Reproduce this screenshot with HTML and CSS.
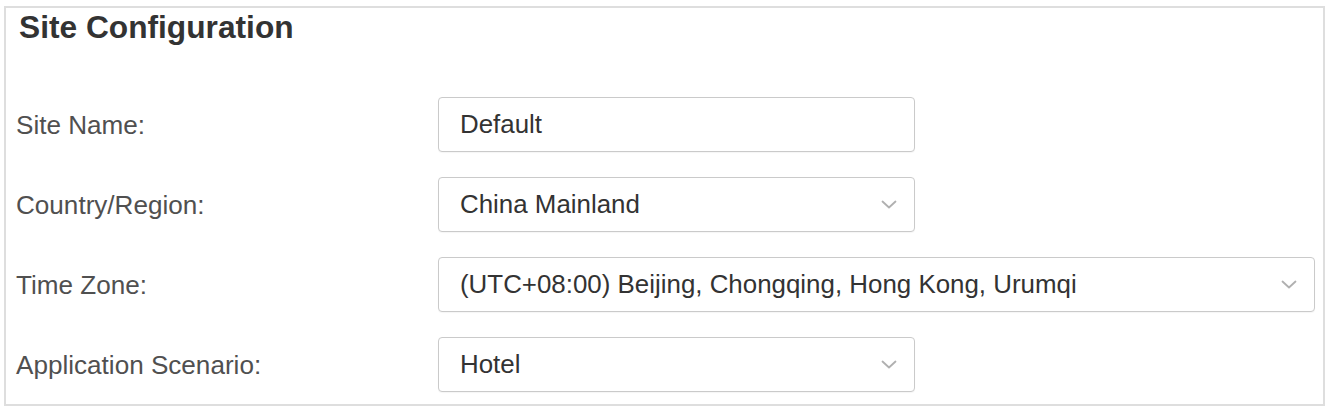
FILE: index.html
```html
<!DOCTYPE html>
<html lang="en">
<head>
<meta charset="utf-8">
<title>Site Configuration</title>
<link rel="stylesheet" href="styles.css">
</head>
<body>
<section class="panel">
  <h2 class="title">Site Configuration</h2>
  <div class="form">
    <div class="label">Site Name:</div>
    <div class="field short"><span class="value">Default</span></div>

    <div class="label">Country/Region:</div>
    <div class="field short select"><span class="value">China Mainland</span>
      <svg class="chev" width="16" height="9" viewBox="0 0 16 9"><polyline points="1.5,1.5 8,7.5 14.5,1.5" fill="none" stroke="#b0b0b0" stroke-width="1.8" stroke-linecap="round" stroke-linejoin="round"/></svg>
    </div>

    <div class="label">Time Zone:</div>
    <div class="field wide select"><span class="value">(UTC+08:00) Beijing, Chongqing, Hong Kong, Urumqi</span>
      <svg class="chev" width="16" height="9" viewBox="0 0 16 9"><polyline points="1.5,1.5 8,7.5 14.5,1.5" fill="none" stroke="#b0b0b0" stroke-width="1.8" stroke-linecap="round" stroke-linejoin="round"/></svg>
    </div>

    <div class="label">Application Scenario:</div>
    <div class="field short select"><span class="value">Hotel</span>
      <svg class="chev" width="16" height="9" viewBox="0 0 16 9"><polyline points="1.5,1.5 8,7.5 14.5,1.5" fill="none" stroke="#b0b0b0" stroke-width="1.8" stroke-linecap="round" stroke-linejoin="round"/></svg>
    </div>
  </div>
</section>
</body>
</html>
```
FILE: styles.css
```css
* { box-sizing: border-box; }
html, body { margin: 0; padding: 0; background: #fff; }
body {
  font-family: "Liberation Sans", Arial, sans-serif;
  color: #333;
}
.panel {
  margin: 6px 0 0 4px;
  width: 1321px;
  height: 400px;
  border: 2px solid #dedede;
  padding: 0 10px 0 10px;
}
.title {
  margin: 1px 0 0 0;
  padding-left: 3px;
  font-size: 31.7px;
  line-height: 36px;
  font-weight: bold;
  color: #333;
}
.form {
  margin-top: 52px;
  display: grid;
  grid-template-columns: 422px 1fr;
  row-gap: 25px;
  align-items: center;
}
.label {
  font-size: 26.1px;
  color: #505050;
  line-height: 30px;
}
.field {
  height: 55px;
  border: 1px solid #cacaca;
  border-radius: 4px;
  display: flex;
  align-items: center;
  justify-content: space-between;
  padding: 0 17px 0 21px;
  font-size: 25.9px;
  color: #333;
  background: #fff;
  box-shadow: 0 1px 1px rgba(0,0,0,0.04);
}
.field.short { width: 477px; }
.field.wide { width: 877px; }
.value { white-space: nowrap; }
.chev { flex: none; }
```
